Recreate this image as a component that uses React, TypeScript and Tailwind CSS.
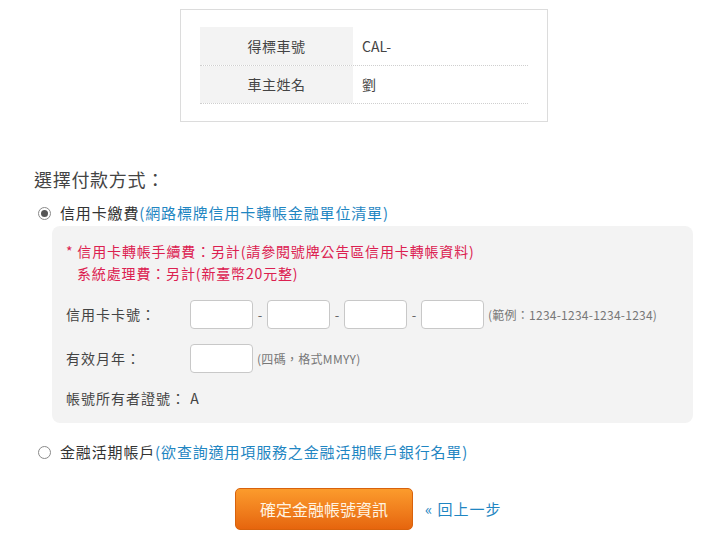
import React from "react";

const font = { fontFamily: '"Microsoft JhengHei", "Noto Sans CJK TC", "Noto Sans", sans-serif' };

function Radio({ checked }: { checked?: boolean }) {
  return (
    <span className="inline-flex items-center justify-center w-[13px] h-[13px] rounded-full border border-[#8a8a8a] bg-white shrink-0">
      {checked && <span className="w-[7px] h-[7px] rounded-full bg-[#555]" />}
    </span>
  );
}

function Box({ w = "w-[63px]" }: { w?: string }) {
  return <span className={`${w} h-[29px] bg-white border border-[#c8c8c8] rounded-[4px] shrink-0`} />;
}

function Dash() {
  return <span className="w-[14px] text-center text-[13px] text-[#666]">-</span>;
}

export default function App() {
  return (
    <div className="w-[728px] h-[542px] bg-white text-[#333] overflow-hidden" style={font}>
      <div className="pt-[9px] flex justify-center">
        <div className="w-[368px] border border-[#dcdcdc] px-[19px] pt-[17px] pb-[17px]">
          <div className="flex h-[39px] border-b border-dotted border-[#cfcfcf]">
            <div className="w-[153px] bg-[#f3f3f3] flex items-center justify-center text-[14px] tracking-[0.5px] text-[#444]">得標車號</div>
            <div className="flex items-center pl-[9px] text-[14px] text-[#444]">CAL-</div>
          </div>
          <div className="flex h-[38px] border-b border-dotted border-[#cfcfcf]">
            <div className="w-[153px] bg-[#f3f3f3] flex items-center justify-center text-[14px] tracking-[0.5px] text-[#444]">車主姓名</div>
            <div className="flex items-center pl-[9px] text-[14px] text-[#444]">劉</div>
          </div>
        </div>
      </div>

      <div className="pl-[34px] mt-[45px]">
        <div className="text-[18px] leading-[24px] tracking-[0.7px] text-[#444]">選擇付款方式：</div>

        <div className="mt-[11px] flex items-center h-[22px] pl-[4px]">
          <Radio checked />
          <span className="ml-[9px] text-[15px] tracking-[0.85px] text-[#333]">
            信用卡繳費<span className="text-[#1f86c2]">(網路標牌信用卡轉帳金融單位清單)</span>
          </span>
        </div>

        <div className="mt-[2px] ml-[18px] w-[641px] bg-[#f3f3f3] rounded-[8px] pl-[14px] pt-[14px] pb-[14px]">
          <div className="text-[14px] leading-[22px] tracking-[0.85px] text-[#dc2050]">
            <div>* 信用卡轉帳手續費：另計(請參閱號牌公告區信用卡轉帳資料)</div>
            <div className="pl-[11px]">系統處理費：另計(新臺幣20元整)</div>
          </div>

          <div className="mt-[16px] flex items-center">
            <span className="w-[124px] text-[14px] tracking-[1px] text-[#444]">信用卡卡號：</span>
            <Box />
            <Dash />
            <Box />
            <Dash />
            <Box />
            <Dash />
            <Box />
            <span className="ml-[4px] text-[12px] tracking-[0.25px] text-[#777]">(範例：1234-1234-1234-1234)</span>
          </div>

          <div className="mt-[15px] flex items-center">
            <span className="w-[124px] text-[14px] tracking-[1px] text-[#444]">有效月年：</span>
            <Box />
            <span className="ml-[4px] text-[12px] tracking-[0.3px] text-[#777]">(四碼，格式MMYY)</span>
          </div>

          <div className="mt-[14px] text-[14px] leading-[22px] tracking-[1px] text-[#444]">帳號所有者證號： A</div>
        </div>

        <div className="mt-[18px] flex items-center h-[22px] pl-[4px]">
          <Radio />
          <span className="ml-[9px] text-[15px] tracking-[0.85px] text-[#333]">
            金融活期帳戶<span className="text-[#1f86c2]">(欲查詢適用項服務之金融活期帳戶銀行名單)</span>
          </span>
        </div>

        <div className="mt-[25px] flex items-center pl-[201px]">
          <button className="w-[178px] h-[42px] rounded-[5px] border border-[#d8620c] bg-gradient-to-b from-[#fb9b2c] to-[#e6650d] text-[16px] text-[#fff4e2]">
            確定金融帳號資訊
          </button>
          <span className="ml-[12px] text-[15px] tracking-[1px] text-[#1f86c2]">« 回上一步</span>
        </div>
      </div>
    </div>
  );
}
